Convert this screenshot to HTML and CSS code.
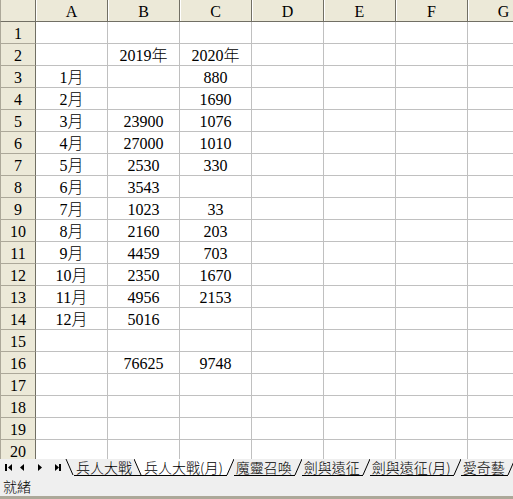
FILE: index.html
```html
<!DOCTYPE html>
<html>
<head>
<meta charset="utf-8">
<link rel="stylesheet" href="styles.css">
</head>
<body>
<div class="app">
  <div class="sheet">
    <div class="corner"></div><div class="ch">A</div><div class="ch">B</div><div class="ch">C</div><div class="ch">D</div><div class="ch">E</div><div class="ch">F</div><div class="ch">G</div>
    <div class="rh">1</div><div class="c"></div><div class="c"></div><div class="c"></div><div class="c"></div><div class="c"></div><div class="c"></div><div class="c"></div>
    <div class="rh">2</div><div class="c"></div><div class="c">2019年</div><div class="c">2020年</div><div class="c"></div><div class="c"></div><div class="c"></div><div class="c"></div>
    <div class="rh">3</div><div class="c">1月</div><div class="c"></div><div class="c">880</div><div class="c"></div><div class="c"></div><div class="c"></div><div class="c"></div>
    <div class="rh">4</div><div class="c">2月</div><div class="c"></div><div class="c">1690</div><div class="c"></div><div class="c"></div><div class="c"></div><div class="c"></div>
    <div class="rh">5</div><div class="c">3月</div><div class="c">23900</div><div class="c">1076</div><div class="c"></div><div class="c"></div><div class="c"></div><div class="c"></div>
    <div class="rh">6</div><div class="c">4月</div><div class="c">27000</div><div class="c">1010</div><div class="c"></div><div class="c"></div><div class="c"></div><div class="c"></div>
    <div class="rh">7</div><div class="c">5月</div><div class="c">2530</div><div class="c">330</div><div class="c"></div><div class="c"></div><div class="c"></div><div class="c"></div>
    <div class="rh">8</div><div class="c">6月</div><div class="c">3543</div><div class="c"></div><div class="c"></div><div class="c"></div><div class="c"></div><div class="c"></div>
    <div class="rh">9</div><div class="c">7月</div><div class="c">1023</div><div class="c">33</div><div class="c"></div><div class="c"></div><div class="c"></div><div class="c"></div>
    <div class="rh">10</div><div class="c">8月</div><div class="c">2160</div><div class="c">203</div><div class="c"></div><div class="c"></div><div class="c"></div><div class="c"></div>
    <div class="rh">11</div><div class="c">9月</div><div class="c">4459</div><div class="c">703</div><div class="c"></div><div class="c"></div><div class="c"></div><div class="c"></div>
    <div class="rh">12</div><div class="c">10月</div><div class="c">2350</div><div class="c">1670</div><div class="c"></div><div class="c"></div><div class="c"></div><div class="c"></div>
    <div class="rh">13</div><div class="c">11月</div><div class="c">4956</div><div class="c">2153</div><div class="c"></div><div class="c"></div><div class="c"></div><div class="c"></div>
    <div class="rh">14</div><div class="c">12月</div><div class="c">5016</div><div class="c"></div><div class="c"></div><div class="c"></div><div class="c"></div><div class="c"></div>
    <div class="rh">15</div><div class="c"></div><div class="c"></div><div class="c"></div><div class="c"></div><div class="c"></div><div class="c"></div><div class="c"></div>
    <div class="rh">16</div><div class="c"></div><div class="c">76625</div><div class="c">9748</div><div class="c"></div><div class="c"></div><div class="c"></div><div class="c"></div>
    <div class="rh">17</div><div class="c"></div><div class="c"></div><div class="c"></div><div class="c"></div><div class="c"></div><div class="c"></div><div class="c"></div>
    <div class="rh">18</div><div class="c"></div><div class="c"></div><div class="c"></div><div class="c"></div><div class="c"></div><div class="c"></div><div class="c"></div>
    <div class="rh">19</div><div class="c"></div><div class="c"></div><div class="c"></div><div class="c"></div><div class="c"></div><div class="c"></div><div class="c"></div>
    <div class="rh">20</div><div class="c"></div><div class="c"></div><div class="c"></div><div class="c"></div><div class="c"></div><div class="c"></div><div class="c"></div>
  </div>
  <div class="tabbar">
    <div class="nav">
      <svg width="64" height="17" viewBox="0 0 64 17">
        <rect x="5" y="5" width="2" height="7" fill="#000"/>
        <polygon points="12,5 12,12 8,8.5" fill="#000"/>
        <polygon points="24,5 24,12 20,8.5" fill="#000"/>
        <polygon points="38,5 38,12 42,8.5" fill="#000"/>
        <polygon points="55,5 55,12 59,8.5" fill="#000"/>
        <rect x="59" y="5" width="2" height="7" fill="#000"/>
      </svg>
    </div>
    <div class="tabs">
      <svg class="sep" width="10" height="17" viewBox="0 0 10 17"><line x1="2" y1="0" x2="9" y2="16" stroke="#000"/></svg>
      <span class="tab t1">兵人大戰</span>
      <svg class="sep" width="8" height="17" viewBox="0 0 8 17"><polygon points="0,0 8,0 8,16 7,16" fill="#fff"/><line x1="0" y1="0" x2="7" y2="16" stroke="#000"/><line x1="0" y1="16.5" x2="8" y2="16.5" stroke="#000"/></svg>
      <span class="tab active">兵人大戰(月)</span>
      <svg class="sep" width="9" height="17" viewBox="0 0 9 17"><polygon points="0,0 9,0 2,16 0,16" fill="#fff"/><line x1="9" y1="0" x2="2" y2="16" stroke="#000"/><line x1="0" y1="16.5" x2="2" y2="16.5" stroke="#000"/></svg>
      <span class="tab t3">魔靈召喚</span>
      <svg class="sep" width="8" height="17" viewBox="0 0 8 17"><line x1="8" y1="0" x2="1" y2="16" stroke="#000"/><line x1="0" y1="16.5" x2="1" y2="16.5" stroke="#000"/></svg>
      <span class="tab t4">劍與遠征</span>
      <svg class="sep" width="8" height="17" viewBox="0 0 8 17"><line x1="8" y1="0" x2="1" y2="16" stroke="#000"/><line x1="0" y1="16.5" x2="1" y2="16.5" stroke="#000"/></svg>
      <span class="tab t5">劍與遠征(月)</span>
      <svg class="sep" width="8" height="17" viewBox="0 0 8 17"><line x1="8" y1="0" x2="1" y2="16" stroke="#000"/><line x1="0" y1="16.5" x2="1" y2="16.5" stroke="#000"/></svg>
      <span class="tab t6">愛奇藝</span>
      <svg class="sep" width="9" height="17" viewBox="0 0 9 17"><line x1="8" y1="0" x2="1" y2="16" stroke="#000"/><line x1="0" y1="16.5" x2="1" y2="16.5" stroke="#000"/></svg>
    </div>
  </div>
  <div class="status">就緒</div>
</div>
</body>
</html>
```

FILE: styles.css
```css
html, body {
  margin: 0;
  padding: 0;
  background: #ffffff;
}
.app {
  width: 513px;
  height: 499px;
  overflow: hidden;
  font-family: "Liberation Serif", "Noto Sans CJK TC", serif;
}
.sheet {
  display: grid;
  grid-template-columns: 36px repeat(7, 72px);
  grid-auto-rows: 22px;
  height: 459px;
  overflow: hidden;
  width: 540px;
}
.sheet > div {
  box-sizing: border-box;
  display: flex;
  align-items: center;
  justify-content: center;
  font-size: 16px;
  font-weight: 300;
  color: #000;
  line-height: 1;
  padding-top: 2px;
}
.corner {
  background: #ece9d8;
  border-right: 1px solid #716f64;
  border-bottom: 1px solid #716f64;
  border-left: 1px solid #aca899;
}
.ch {
  background: #ece9d8;
  border-right: 1px solid #716f64;
  border-bottom: 1px solid #716f64;
  box-shadow: inset 1px 0 0 #ffffff;
}
.rh {
  background: #ece9d8;
  border-right: 1px solid #716f64;
  border-bottom: 1px solid #aca899;
  border-left: 1px solid #aca899;
}
.c {
  background: #ffffff;
  border-right: 1px solid #c0c0c0;
  border-bottom: 1px solid #c0c0c0;
}
.tabbar {
  display: flex;
  height: 17px;
  background: #efefef;
  font-family: "Noto Sans CJK TC", sans-serif;
  font-weight: 300;
}
.nav {
  width: 64px;
  height: 17px;
  flex: none;
}
.nav svg, .sep {
  display: block;
}
.tabs {
  display: flex;
  align-items: stretch;
  height: 17px;
}
.tab {
  box-sizing: border-box;
  height: 17px;
  font-size: 14px;
  line-height: 16px;
  border-bottom: 1px solid #000;
  padding: 0 2px;
  white-space: nowrap;
  color: #000;
}
.tab.active {
  background: #ffffff;
}
.status {
  box-sizing: border-box;
  height: 23px;
  background: #efefef;
  border-bottom: 3px solid #aca899;
  font-family: "Noto Sans CJK TC", sans-serif;
  font-weight: 300;
  font-size: 14px;
  line-height: 20px;
  padding-left: 3px;
  color: #000;
}
```
